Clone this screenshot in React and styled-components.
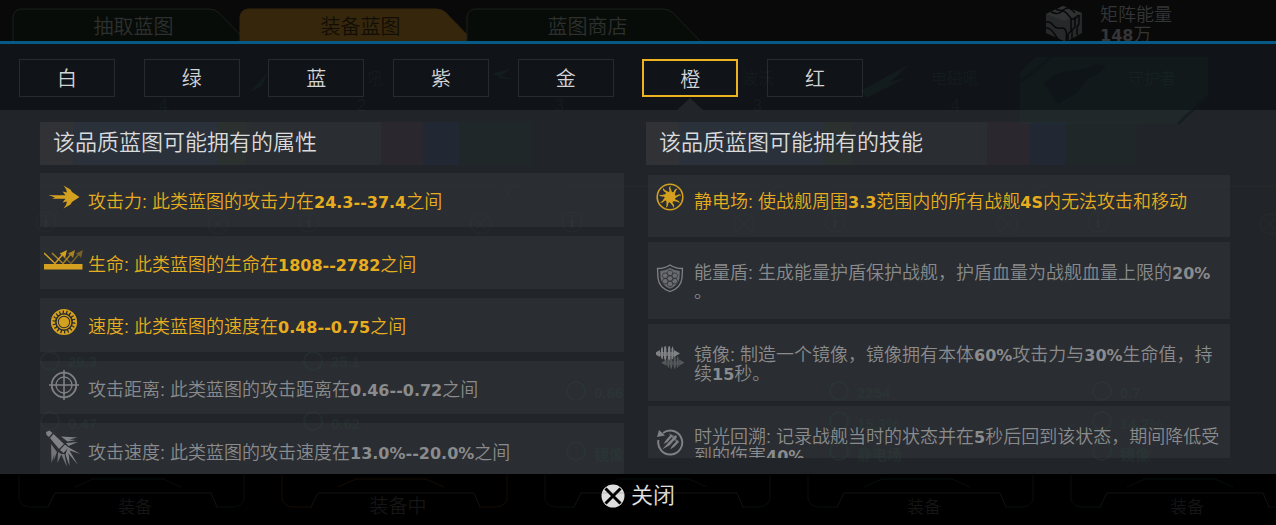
import React, { useState } from "react";
import styled, { createGlobalStyle, css } from "styled-components";

const GlobalStyle = createGlobalStyle`
  * {
    box-sizing: border-box;
  }

  body {
    margin: 0;
    background: #000;
    font-family: "Liberation Sans", "Noto Sans CJK SC", sans-serif;
    font-weight: 350;
  }

  button {
    font-family: inherit;
    font-weight: inherit;
    background: none;
    border: none;
    padding: 0;
    cursor: pointer;
  }
`;

const Page = styled.div`
  position: relative;
  display: flex;
  flex-direction: column;
  height: 100vh;
  overflow: hidden;
`;

const TopBar = styled.header`
  display: flex;
  align-items: flex-start;
  justify-content: space-between;
  height: 44px;
  padding: 0 104px 0 13px;
  overflow: hidden;
  background: #090909;
  border-bottom: 3px solid #075a86;
`;

const TopTabs = styled.nav`
  display: flex;
  padding-top: 9px;
`;

const TopTab = styled.button`
  position: relative;
  width: 227px;
  height: 34px;
  padding-left: 14px;
  font-size: 20px;
  line-height: 36px;
  color: ${({ $active }) => ($active ? "#120e05" : "#2e302f")};

  span {
    position: relative;
  }
`;

const TabShape = styled.svg`
  position: absolute;
  top: 0;
  left: 0;
  overflow: visible;
`;

const Energy = styled.div`
  display: flex;
  gap: 18px;
  padding-top: 5px;
  color: #343536;
  font-size: 18px;
  line-height: 20px;
`;

const QualityBar = styled.nav`
  height: 66px;
  flex: none;
  padding: 15px 19px 0;
  background: #101317;
`;

const QualityList = styled.div`
  display: flex;
  justify-content: space-between;
  max-width: 844px;
`;

const QualityButton = styled.button`
  position: relative;
  width: 96px;
  height: 38px;
  font-size: 20px;
  line-height: 38px;
  color: #d3d4d6;
  border: 1px solid #282b2e;

  ${({ $active }) =>
    $active &&
    css`
      border: 2px solid #eeb120;

      &::after {
        content: "";
        position: absolute;
        top: 37px;
        left: 33px;
        border: 13px solid transparent;
        border-top: none;
        border-bottom: 12px solid #212528;
      }
    `}
`;

const Body = styled.main`
  flex: 1;
  min-height: 0;
  display: grid;
  grid-template-columns: 1fr 1fr;
  gap: 22px;
  padding: 12px 46px 0 40px;
  overflow: hidden;
  background: #212428;
`;

const Column = styled.section`
  display: flex;
  flex-direction: column;
  min-height: 0;
  padding-bottom: ${({ $inset }) => ($inset ? "16px" : "0")};
`;

const Title = styled.h2`
  flex: none;
  max-width: 491px;
  height: 43px;
  margin: 0;
  padding-left: 13px;
  font-size: 22px;
  font-weight: inherit;
  line-height: 41px;
  color: #dadbdd;
  background: linear-gradient(
    90deg,
    #303236 33px,
    #2a313a 33px 177px,
    #2a312f 177px 206px,
    #2a2d31 206px 341px,
    #2b272f 341px 383px,
    #212833 383px 419px,
    #202728 419px
  );
`;

const AttrList = styled.ul`
  flex: none;
  display: grid;
  grid-template-rows: repeat(5, 1fr);
  gap: 9px;
  min-height: 304px;
  margin: 8px 0 0;
  padding: 0;
  list-style: none;
`;

const AttrRow = styled.li`
  display: flex;
  align-items: center;
  gap: 4px;
  padding: 0 4px;
  background: #2a2d31;
  color: ${({ $on }) => ($on ? "#e7ad1e" : "#8a8b8d")};

  svg {
    margin-bottom: 5px;
    opacity: 0.9;
  }
`;

const SkillList = styled.ul`
  display: flex;
  flex-direction: column;
  gap: 5px;
  margin: 10px 0 0 2px;
  padding: 0;
  overflow: hidden;
  list-style: none;
`;

const SkillRow = styled.li`
  flex: none;
  display: flex;
  align-items: flex-start;
  gap: 10px;
  min-height: ${({ $short }) => ($short ? "62px" : "77px")};
  padding: ${({ $short }) => ($short ? "8px" : "22px")} 4px 0 8px;
  background: #2a2d31;
  color: ${({ $on }) => ($on ? "#e7ad1e" : "#8a8b8d")};

  svg {
    opacity: 0.9;
  }

  p {
    padding-top: ${({ $short }) => ($short ? "10px" : "0")};
  }
`;

const Text = styled.p`
  flex: 1;
  margin: 0;
  font-size: 18px;
  line-height: 19px;
  line-break: anywhere;
`;

const AttrText = styled(Text)`
  padding-top: 6px;
`;

const Num = styled.b`
  font-family: "DejaVu Sans", sans-serif;
  font-size: 16px;
  font-weight: 700;
  line-height: 1;
`;

const Footer = styled.footer`
  flex: none;
  display: flex;
  justify-content: center;
  height: 51px;
  padding-bottom: 8px;
  background: #000;
`;

const CloseButton = styled.button`
  display: flex;
  align-items: center;
  gap: 6px;
  font-size: 22px;
  line-height: 24px;
  color: #e2e2e2;
`;

const Backdrop = styled.svg`
  position: absolute;
  top: 0;
  left: 0;
  pointer-events: none;
`;

const Icon = ({ size = 40, children }) => (
  <svg width={size} height={size} viewBox={`0 0 ${size} ${size}`} fill="currentColor" aria-hidden="true">
    {children}
  </svg>
);

const range = (n) => Array.from({ length: n }, (_, i) => i);

const ArrowIcon = () => (
  <Icon>
    <path d="M4.500 18L10 18.300H21.500L18.500 14.500L23 15.500L22 12L19.500 8.500L26.500 12.500L28 15L35.500 20L28 25L26.500 27.500L19.500 31.500L22 28L23 24.500L18.500 25.500L21.500 21.800H8L11 20.500z" />
  </Icon>
);

const Bounce = ({ x, o }) => (
  <g transform={`translate(${x} 0)`} opacity={o}>
    <path d="M0 13l11 10.500L19 14" fill="none" stroke="currentColor" strokeWidth="1.500" />
    <path d="M23 10l-2 8-2-2.500-3-2z" />
  </g>
);

const LifeIcon = () => (
  <Icon>
    <rect x="0" y="24" width="38.500" height="5.500" />
    <Bounce x={0} o={1} />
    <Bounce x={8} o={0.75} />
    <Bounce x={16} o={0.45} />
  </Icon>
);

const GearIcon = () => (
  <Icon>
    <circle cx="20" cy="20" r="11" fill="none" stroke="currentColor" strokeWidth="4.200" />
    {range(18).map((i) => (
      <path
        key={i}
        d="M20.500 12.500q-2-1.500-1-4"
        fill="none"
        stroke="#2a2d31"
        strokeWidth="1.200"
        transform={`rotate(${i * 20} 20 20)`}
      />
    ))}
    <circle cx="20" cy="20" r="6.800" fill="none" stroke="currentColor" strokeWidth="1.200" />
    <circle cx="20" cy="20" r="5.200" />
  </Icon>
);

const CrosshairIcon = () => (
  <Icon>
    <g fill="none" stroke="currentColor">
      <circle cx="20" cy="20" r="12.300" strokeWidth="1.800" />
      <circle cx="20" cy="20" r="8" strokeWidth="1.300" />
      <path d="M20 5v30M5 20h30" strokeWidth="1.600" />
    </g>
  </Icon>
);

const RocketIcon = () => (
  <Icon>
    <path d="M2 4l3.500-1.500L8.500 5 5 9 2.500 7z" />
    <path d="M6 10l3.500-4L20 16l-5 5z" />
    <path d="M16 22l5-5.500 3.500 3-5 5.500z" />
    <path d="M17 8.500l16.500 1-8.500 2 7 .5-8.500 1.500zM22 15l12-1-9.500 4zM24 19l12.500 7-11-3.500L34 37l-10-12 1 3 .500 10-4-11.500z" />
    <path d="M7 16l.5 19 3-9-1 7 3.500-9zM14 24l-.5 11 4-9zM17 26l6 13-2.500-13z" opacity=".85" />
  </Icon>
);

const StaticIcon = () => (
  <Icon size={28}>
    <circle cx="14" cy="14" r="12.800" fill="none" stroke="currentColor" strokeWidth="1.600" />
    <circle cx="14" cy="14" r="5.500" />
    {range(9).map((i) => (
      <path key={i} d="M11.500 10.500q3-1.500 1.500-4.500-.5-2 1.500-3.500-.5 2.500.5 4t1 4.500z" transform={`rotate(${i * 40} 14 14)`} />
    ))}
  </Icon>
);

const ShieldIcon = () => (
  <Icon size={28}>
    <path
      d="M14 1q5 3.500 12.500 3.500L26 14q-1 10-12 13.500Q3 24 2 14L1.500 4.500Q9 4.500 14 1z"
      fill="none"
      stroke="currentColor"
      strokeWidth="1.300"
    />
    <path d="M14 4q4 2.500 9.800 3L23.500 14q-1 7.500-9.500 10.700Q5.500 21.500 4.500 14L4.200 7Q10 6.500 14 4z" opacity=".75" />
    <g fill="none" stroke="#2a2d31" strokeWidth=".7">
      {[[14, 9], [14, 14.5], [14, 20], [9.2, 11.7], [9.2, 17.2], [18.8, 11.7], [18.8, 17.2]].map(([x, y]) => (
        <path key={`${x}-${y}`} d={`M${x - 3} ${y}l1.500-2.600h3l1.500 2.600-1.500 2.600h-3z`} />
      ))}
    </g>
  </Icon>
);

const Ship = () => (
  <>
    <path d="M-1 8.500L5 5v7zM25 8.500L19 5v7z" />
    <path d="M6 4L7 1l1 3v9l-1 1.500L6 12zM9 3l1.200-3L11.400 3v10l-1.200 3L9 13zM13 3l1.200-3 1.200 3v10l-1.200 3-1.200-3zM16.500 4l1-3 1 3v8l-1 2.500-1-1.500z" />
    <path d="M5 7h14v4H5z" opacity=".7" />
  </>
);

const MirrorIcon = () => (
  <Icon size={28}>
    <g transform="translate(-1 -1)">
      <Ship />
    </g>
    <g transform="translate(6 9) scale(.9)" opacity=".5">
      <Ship />
    </g>
  </Icon>
);

const RewindIcon = () => (
  <Icon size={28}>
    <path d="M7 5a12 12 0 1 1-4.500 7" fill="none" stroke="currentColor" strokeWidth="2" />
    <path d="M1 9l2-7 6 5.500z" />
    <path d="M15 6.500L10 12l-2.500 4 4-2 5-6zM20 7l-8 8-6 6.500 8-4.500 7-8zM21.500 12l-5.500 6-2 3.500 4-2.500 5-5z" />
    <path d="M13 5.500l6 2.500 3 7-4-3-4-4z" opacity=".7" />
  </Icon>
);

const CubeIcon = () => (
  <svg width="36" height="37" viewBox="0 0 36 37" fill="#262829" aria-hidden="true">
    <path d="M0 9L17 1l19 7v20L20 37 0 28z" />
    <path d="M0 9l18 7 18-8-19-7z" fill="#2f3132" />
    <g fill="none" stroke="#090909" strokeWidth="1.500">
      <path d="M5 7q7 3 10 0t8 4 9-1M10 4q5 3 9 0t10 4M0 17q4-1 7 3t9 3 4 14M0 23q4 0 7 4t7 10M25 14v12l-3 3v8M29 12v10l-3 3v10M33 10v9l-2 3v8" />
    </g>
  </svg>
);

const CloseIcon = () => (
  <svg width="24" height="24" viewBox="0 0 24 24" aria-hidden="true">
    <circle cx="12" cy="12" r="11.500" fill="#dfdfdf" />
    <path d="M4.500 4.500l15 15M19.500 4.500l-15 15" stroke="#000" strokeWidth="3" />
  </svg>
);

// slots of the hangar screen that stays dimly visible below the dialog
const slots = [
  { label: "装备", stats: ["29.3", "", "0.47", ""] },
  { label: "装备中", stats: ["25.1", "", "0.62", ""] },
  { label: "装备", stats: ["", "0.66", "", "镜像"] },
  { label: "装备", stats: ["", "2254", "15.3%", "静电场"] },
  { label: "装备", stats: ["", "0.7", "14.2%", "镜像"] },
];

const HangarBackdrop = () => (
  <Backdrop width="1276" height="525" aria-hidden="true">
    <path d="M1036 57h172v40l-24 27h-164V72z" fill="#1c4a36" opacity=".12" />
    <path d="M1020 82l32-25M1178 124l30-28" stroke="#101317" opacity=".5" strokeWidth="3" />
    <path d="M1044 84q8-10 20-12l24-4 8-4 10 2-8 8-10 4-10 14-20 12q-6-8-14-20z" fill="#0c1014" opacity=".5" />
    <g fill="#2a5040" opacity=".15" fontSize="16">
      <text x="368" y="84">吼</text>
      <text x="742" y="84">波沃</text>
      <text x="931" y="84">电磁吼</text>
      <text x="1128" y="84">守护者</text>
      <path d="M250 92l18-20-6 14zM492 74l20-6-14 10 20 2zM862 90l48-26-20 18 16-4-40 20z" />
      {["4", "2", "3", "3", "4"].map((n, i) => (
        <text key={i} x={159 + i * 198} y="111">
          {n}
        </text>
      ))}
    </g>
    {slots.map((slot, i) => (
      <g key={i} transform={`translate(${i * 263} 0)`}>
        <g fill="none" stroke="#2f5340" opacity=".2">
          <path d="M40 186h198M262 186h-8q-8 0-10 10" />
          <circle cx="46" cy="222" r="10" />
          <path d="M46 219v9M46 215v2" strokeWidth="3" />
          <circle cx="218" cy="224" r="10" />
          <path d="M213 219l10 10M223 219l-10 10" />
        </g>
        <g fill="#2f5340" opacity=".2" fontSize="15" fontWeight="bold">
          {slot.stats.map((s, k) => (
            <g key={k}>
              {s && <circle cx="50" cy={361 + k * 30} r="9" fill="none" stroke="#2f5340" strokeWidth="2" />}
              <text x="68" y={367 + k * 31}>
                {s}
              </text>
            </g>
          ))}
        </g>
        <g fill="none" stroke={i === 1 ? "#5a3512" : "#1d3a2a"} opacity=".25">
          <path d="M19 475v24q2 8 12 8h18M244 475v24q-2 8-12 8h-16" />
          <path d="M48 507l7-14h156l6 14" stroke="#554050" />
          <path d="M75 487l18-8h70l18 8" />
        </g>
        <text x="135" y="513" textAnchor="middle" fontSize={i === 1 ? 19 : 17} fill="#151515">
          {i === 2 ? "" : slot.label}
        </text>
      </g>
    ))}
  </Backdrop>
);

const topTabs = ["抽取蓝图", "装备蓝图", "蓝图商店"];
const qualities = ["白", "绿", "蓝", "紫", "金", "橙", "红"];

const attributes = [
  { icon: ArrowIcon, on: true, text: "攻击力: 此类蓝图的攻击力在24.3--37.4之间" },
  { icon: LifeIcon, on: true, text: "生命: 此类蓝图的生命在1808--2782之间" },
  { icon: GearIcon, on: true, text: "速度: 此类蓝图的速度在0.48--0.75之间" },
  { icon: CrosshairIcon, text: "攻击距离: 此类蓝图的攻击距离在0.46--0.72之间" },
  { icon: RocketIcon, text: "攻击速度: 此类蓝图的攻击速度在13.0%--20.0%之间" },
];

const skills = [
  { icon: StaticIcon, on: true, short: true, text: "静电场: 使战舰周围3.3范围内的所有战舰4S内无法攻击和移动" },
  { icon: ShieldIcon, text: "能量盾: 生成能量护盾保护战舰，护盾血量为战舰血量上限的20%。" },
  { icon: MirrorIcon, text: "镜像: 制造一个镜像，镜像拥有本体60%攻击力与30%生命值，持续15秒。" },
  { icon: RewindIcon, text: "时光回溯: 记录战舰当时的状态并在5秒后回到该状态，期间降低受到的伤害40%。" },
];

const withNumbers = (text) =>
  text.split(/([\d.%S-]+)/).map((part, i) => (i % 2 ? <Num key={i}>{part}</Num> : part));

const App = () => {
  const [quality, setQuality] = useState("橙");

  return (
    <>
      <GlobalStyle />
      <Page>
        <TopBar>
          <TopTabs>
            {topTabs.map((name, i) => (
              <TopTab key={name} $active={i === 1}>
                <TabShape width="233" height="34">
                  <path
                    d="M0 34V8Q1 0 9 0H196Q202 0 206 4L235 34z"
                    fill={i === 1 ? "#35260c" : "#070c08"}
                    stroke={i === 1 ? "#35260c" : "#1b201c"}
                  />
                </TabShape>
                <span>{name}</span>
              </TopTab>
            ))}
          </TopTabs>
          <Energy>
            <CubeIcon />
            <div>
              <div>矩阵能量</div>
              <div>
                <Num>148</Num>万
              </div>
            </div>
          </Energy>
        </TopBar>
        <QualityBar>
          <QualityList>
            {qualities.map((q) => (
              <QualityButton key={q} $active={q === quality} onClick={() => setQuality(q)}>
                {q}
              </QualityButton>
            ))}
          </QualityList>
        </QualityBar>
        <Body>
          <Column>
            <Title>该品质蓝图可能拥有的属性</Title>
            <AttrList>
              {attributes.map(({ icon: RowIcon, on, text }) => (
                <AttrRow key={text} $on={on}>
                  <RowIcon />
                  <AttrText>{withNumbers(text)}</AttrText>
                </AttrRow>
              ))}
            </AttrList>
          </Column>
          <Column $inset>
            <Title>该品质蓝图可能拥有的技能</Title>
            <SkillList>
              {skills.map(({ icon: RowIcon, on, short, text }) => (
                <SkillRow key={text} $on={on} $short={short}>
                  <RowIcon />
                  <Text>{withNumbers(text)}</Text>
                </SkillRow>
              ))}
            </SkillList>
          </Column>
        </Body>
        <Footer>
          <CloseButton>
            <CloseIcon />
            关闭
          </CloseButton>
        </Footer>
        <HangarBackdrop />
      </Page>
    </>
  );
};

export default App;
